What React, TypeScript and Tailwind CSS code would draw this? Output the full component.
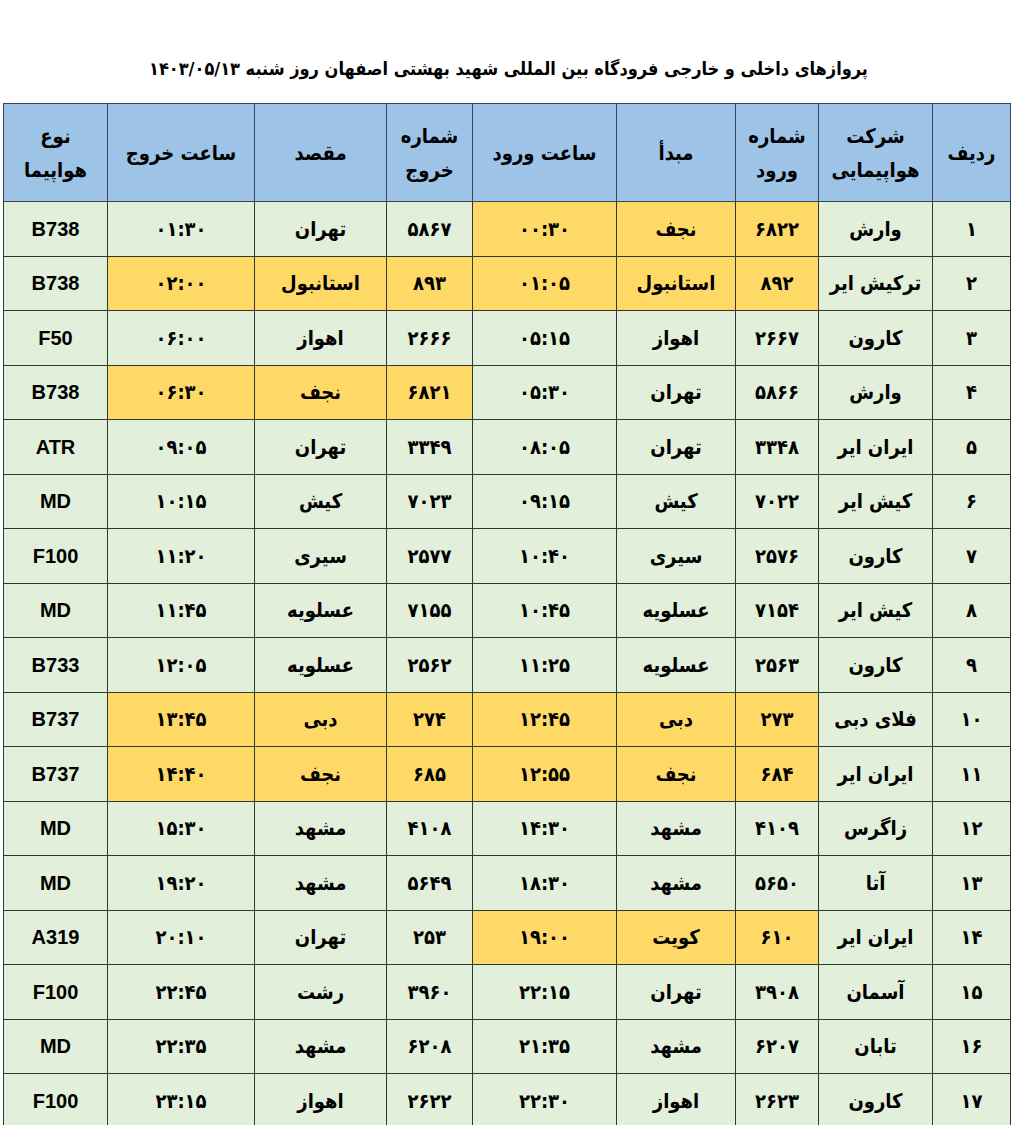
import React from "react"

type Flight = {
  id: string
  airline: string
  inNo: string
  from: string
  inTime: string
  outNo: string
  to: string
  outTime: string
  plane: string
  small: boolean
  arrHi?: boolean
  depHi?: boolean
}

const flights: Flight[] = [
  { id: "۱", airline: "وارش", inNo: "۶۸۲۲", from: "نجف", inTime: "۰۰:۳۰", outNo: "۵۸۶۷", to: "تهران", outTime: "۰۱:۳۰", plane: "B738", small: true, arrHi: true },
  { id: "۲", airline: "ترکیش ایر", inNo: "۸۹۲", from: "استانبول", inTime: "۰۱:۰۵", outNo: "۸۹۳", to: "استانبول", outTime: "۰۲:۰۰", plane: "B738", small: false, arrHi: true, depHi: true },
  { id: "۳", airline: "کارون", inNo: "۲۶۶۷", from: "اهواز", inTime: "۰۵:۱۵", outNo: "۲۶۶۶", to: "اهواز", outTime: "۰۶:۰۰", plane: "F50", small: true },
  { id: "۴", airline: "وارش", inNo: "۵۸۶۶", from: "تهران", inTime: "۰۵:۳۰", outNo: "۶۸۲۱", to: "نجف", outTime: "۰۶:۳۰", plane: "B738", small: true, depHi: true },
  { id: "۵", airline: "ایران ایر", inNo: "۳۳۴۸", from: "تهران", inTime: "۰۸:۰۵", outNo: "۳۳۴۹", to: "تهران", outTime: "۰۹:۰۵", plane: "ATR", small: true },
  { id: "۶", airline: "کیش ایر", inNo: "۷۰۲۲", from: "کیش", inTime: "۰۹:۱۵", outNo: "۷۰۲۳", to: "کیش", outTime: "۱۰:۱۵", plane: "MD", small: false },
  { id: "۷", airline: "کارون", inNo: "۲۵۷۶", from: "سیری", inTime: "۱۰:۴۰", outNo: "۲۵۷۷", to: "سیری", outTime: "۱۱:۲۰", plane: "F100", small: true },
  { id: "۸", airline: "کیش ایر", inNo: "۷۱۵۴", from: "عسلویه", inTime: "۱۰:۴۵", outNo: "۷۱۵۵", to: "عسلویه", outTime: "۱۱:۴۵", plane: "MD", small: false },
  { id: "۹", airline: "کارون", inNo: "۲۵۶۳", from: "عسلویه", inTime: "۱۱:۲۵", outNo: "۲۵۶۲", to: "عسلویه", outTime: "۱۲:۰۵", plane: "B733", small: true },
  { id: "۱۰", airline: "فلای دبی", inNo: "۲۷۳", from: "دبی", inTime: "۱۲:۴۵", outNo: "۲۷۴", to: "دبی", outTime: "۱۳:۴۵", plane: "B737", small: true, arrHi: true, depHi: true },
  { id: "۱۱", airline: "ایران ایر", inNo: "۶۸۴", from: "نجف", inTime: "۱۲:۵۵", outNo: "۶۸۵", to: "نجف", outTime: "۱۴:۴۰", plane: "B737", small: false, arrHi: true, depHi: true },
  { id: "۱۲", airline: "زاگرس", inNo: "۴۱۰۹", from: "مشهد", inTime: "۱۴:۳۰", outNo: "۴۱۰۸", to: "مشهد", outTime: "۱۵:۳۰", plane: "MD", small: false },
  { id: "۱۳", airline: "آتا", inNo: "۵۶۵۰", from: "مشهد", inTime: "۱۸:۳۰", outNo: "۵۶۴۹", to: "مشهد", outTime: "۱۹:۲۰", plane: "MD", small: false },
  { id: "۱۴", airline: "ایران ایر", inNo: "۶۱۰", from: "کویت", inTime: "۱۹:۰۰", outNo: "۲۵۳", to: "تهران", outTime: "۲۰:۱۰", plane: "A319", small: true, arrHi: true },
  { id: "۱۵", airline: "آسمان", inNo: "۳۹۰۸", from: "تهران", inTime: "۲۲:۱۵", outNo: "۳۹۶۰", to: "رشت", outTime: "۲۲:۴۵", plane: "F100", small: false },
  { id: "۱۶", airline: "تابان", inNo: "۶۲۰۷", from: "مشهد", inTime: "۲۱:۳۵", outNo: "۶۲۰۸", to: "مشهد", outTime: "۲۲:۳۵", plane: "MD", small: false },
  { id: "۱۷", airline: "کارون", inNo: "۲۶۲۳", from: "اهواز", inTime: "۲۲:۳۰", outNo: "۲۶۲۲", to: "اهواز", outTime: "۲۳:۱۵", plane: "F100", small: true },
]

const th = "border border-[#3b4452] bg-[#9dc3e6] text-center align-middle font-bold text-[20px] leading-[34px]"
const td = "border border-[#2f3a2f] text-center align-middle font-bold text-[20px]"

function cellBg(hi?: boolean) {
  return hi ? "bg-[#ffd966]" : "bg-[#e2efda]"
}

export default function App() {
  return (
    <div
      dir="rtl"
      className="w-[1017px] h-[1125px] overflow-hidden bg-white text-black"
      style={{ fontFamily: '"DejaVu Sans Condensed", "DejaVu Sans", sans-serif' }}
    >
      <h1 className="pt-[55px] h-[82px] text-center text-[18px] leading-[27px] font-bold">
        پروازهای داخلی و خارجی فرودگاه بین المللی شهید بهشتی اصفهان روز  شنبه ۱۴۰۳/۰۵/۱۳
      </h1>

      <div className="mt-[21px] pl-[4px] pr-[6px]">
        <table className="w-[1007px] table-fixed border-collapse">
          <colgroup>
            <col className="w-[78px]" />
            <col className="w-[114px]" />
            <col className="w-[83px]" />
            <col className="w-[119px]" />
            <col className="w-[144px]" />
            <col className="w-[86px]" />
            <col className="w-[132px]" />
            <col className="w-[147px]" />
            <col className="w-[104px]" />
          </colgroup>
          <thead>
            <tr className="h-[98px]">
              <th className={th}>ردیف</th>
              <th className={th}>شرکت<br />هواپیمایی</th>
              <th className={th}>شماره<br />ورود</th>
              <th className={th}>مبدأ</th>
              <th className={th}>ساعت ورود</th>
              <th className={th}>شماره<br />خروج</th>
              <th className={th}>مقصد</th>
              <th className={th}>ساعت خروج</th>
              <th className={th}>نوع<br />هواپیما</th>
            </tr>
          </thead>
          <tbody>
            {flights.map((f) => (
              <tr key={f.id} className="h-[54.5px]">
                <td className={`${td} bg-[#e2efda]`}>{f.id}</td>
                <td className={`${td} bg-[#e2efda]`}>{f.airline}</td>
                <td className={`${td} ${cellBg(f.arrHi)}`}>{f.inNo}</td>
                <td className={`${td} ${cellBg(f.arrHi)}`}>{f.from}</td>
                <td className={`${td} ${cellBg(f.arrHi)}`}>{f.inTime}</td>
                <td className={`${td} ${cellBg(f.depHi)}`}>{f.outNo}</td>
                <td className={`${td} ${cellBg(f.depHi)}`}>{f.to}</td>
                <td className={`${td} ${cellBg(f.depHi)}`}>{f.outTime}</td>
                <td
                  className={`${td} bg-[#e2efda] ${f.small ? "text-[15px]" : "text-[17px]"}`}
                  style={{ fontFamily: '"Liberation Sans", Arial, sans-serif' }}
                >
                  {f.plane}
                </td>
              </tr>
            ))}
          </tbody>
        </table>
      </div>
    </div>
  )
}
